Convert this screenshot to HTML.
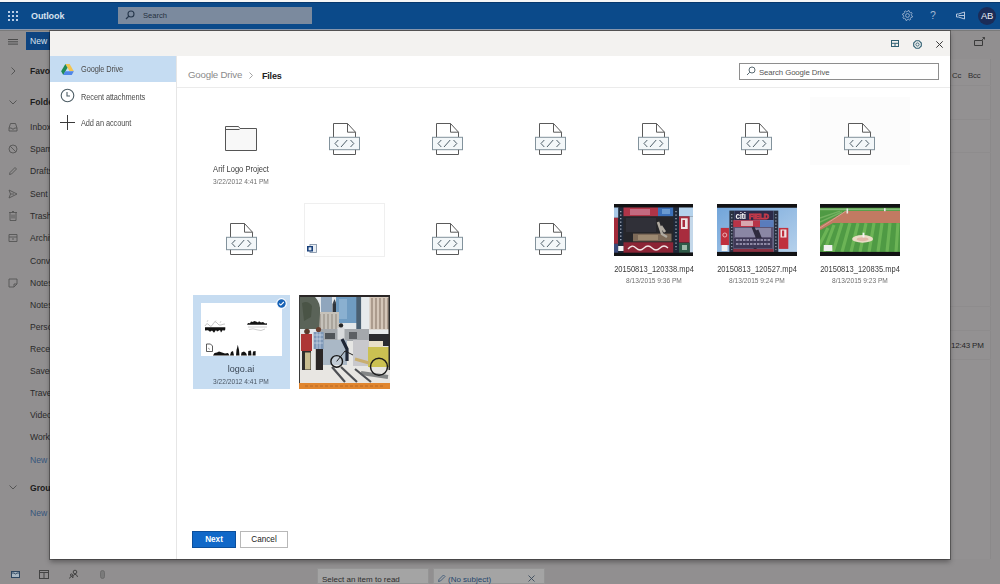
<!DOCTYPE html>
<html><head><meta charset="utf-8">
<style>
*{box-sizing:border-box}
html,body{margin:0;padding:0}
body{width:1000px;height:584px;overflow:hidden;position:relative;background:#918f90;font-family:"Liberation Sans",sans-serif;color:#333}
.a{position:absolute}
.t{position:absolute;white-space:nowrap;line-height:1}
svg{position:absolute;overflow:visible}
/* top bar */
#topw{left:0;top:0;width:1000px;height:2px;background:#f6f6f6}
#top{left:0;top:2px;width:1000px;height:27px;background:#0b4a8a;border-top:1px solid #07386d}
#topl{left:0;top:29px;width:1000px;height:1px;background:#8898b0}
#topl2{left:0;top:30px;width:1000px;height:1px;background:#7a7a7a}
/* bg outlook */
.fl{position:absolute;left:30px;font-size:8.6px;color:#2a2a2a;white-space:nowrap;line-height:1}
.fb{font-weight:bold;color:#1c1c1c}
.fn{color:#35557c}
/* modal */
#modal{left:50px;top:31px;width:900px;height:528px;background:#fff;box-shadow:0 0 0 1px rgba(0,0,0,.3),0 3px 5px rgba(0,0,0,.35)}
#mhead{left:0;top:0;width:901px;height:25px;background:#f3f2f0}
#mnav{left:0;top:25px;width:128px;height:503px;border-right:1px solid #e4e4e4;background:#fff}
#sel{left:1px;top:0;width:126px;height:26px;background:#c5dcf2}
#crumb{left:128px;top:25px;width:773px;height:32px;border-bottom:1px solid #ebebeb}
.nav{font-size:8.8px;color:#4c4c4c;letter-spacing:-0.1px;transform-origin:0 0;transform:scaleX(0.84)}
.nm{font-size:8.9px;color:#3c3c3c;text-align:center;width:100px;transform-origin:50% 0;transform:scaleX(0.85)}
.dt{font-size:7.1px;color:#6e6e6e;text-align:center;width:100px;transform-origin:50% 0;transform:scaleX(0.93)}
</style></head>
<body>
<div class="a" id="topw"></div>
<div class="a" id="top"></div>
<div class="a" id="topl"></div>
<div class="a" id="topl2"></div>

<!-- top bar contents -->
<svg style="left:8px;top:11px" width="10" height="10" viewBox="0 0 10 10">
  <g fill="#b9cde6">
  <rect x="0" y="0" width="2" height="2"/><rect x="4" y="0" width="2" height="2"/><rect x="8" y="0" width="2" height="2"/>
  <rect x="0" y="4" width="2" height="2"/><rect x="4" y="4" width="2" height="2"/><rect x="8" y="4" width="2" height="2"/>
  <rect x="0" y="8" width="2" height="2"/><rect x="4" y="8" width="2" height="2"/><rect x="8" y="8" width="2" height="2"/>
  </g>
</svg>
<div class="t" style="left:31px;top:12px;font-size:9px;font-weight:bold;color:#d6e1ee;letter-spacing:-0.1px">Outlook</div>
<div class="a" style="left:118px;top:7px;width:194px;height:17px;background:#7b8a9e"></div>
<svg style="left:125px;top:10px" width="10" height="10" viewBox="0 0 10 10"><circle cx="6" cy="4" r="3" fill="none" stroke="#27384c" stroke-width="1.1"/><path d="M4 6 L1 9" stroke="#27384c" stroke-width="1.2"/></svg>
<div class="t" style="left:143px;top:12px;font-size:7.6px;color:#26323f">Search</div>
<!-- right icons -->
<svg style="left:902px;top:10px" width="11" height="11" viewBox="0 0 11 11"><path d="M9.50 5.50 L10.47 6.09 L10.19 7.23 L9.06 7.32 L8.33 8.33 L8.60 9.43 L7.59 10.04 L6.74 9.30 L5.50 9.50 L4.91 10.47 L3.77 10.19 L3.68 9.06 L2.67 8.33 L1.57 8.60 L0.96 7.59 L1.70 6.74 L1.50 5.50 L0.53 4.91 L0.81 3.77 L1.94 3.68 L2.67 2.67 L2.40 1.57 L3.41 0.96 L4.26 1.70 L5.50 1.50 L6.09 0.53 L7.23 0.81 L7.32 1.94 L8.33 2.67 L9.43 2.40 L10.04 3.41 L9.30 4.26 Z" fill="none" stroke="#a3b8d2" stroke-width="0.9"/><circle cx="5.5" cy="5.5" r="1.9" fill="none" stroke="#a3b8d2" stroke-width="0.9"/></svg>
<div class="t" style="left:930px;top:10px;font-size:10.5px;color:#a3b8d2">?</div>
<svg style="left:955px;top:11px" width="11" height="9" viewBox="0 0 11 9"><path d="M1.5 3 H3.5 L9.5 1 V8 L3.5 6 H1.5 Z" fill="none" stroke="#b4c6dd" stroke-width="1"/><path d="M3.5 4.5 H9" stroke="#b4c6dd" stroke-width="1"/></svg>
<div class="a" style="left:978px;top:7px;width:18px;height:18px;border-radius:50%;background:#1b2c58"></div>
<div class="t" style="left:978px;top:11px;width:18px;text-align:center;font-size:9.4px;color:#e8edf5;letter-spacing:-0.3px">AB</div>

<!-- outlook background (dimmed) -->
<svg style="left:8px;top:39px" width="10" height="6" viewBox="0 0 10 6"><path d="M0 .5H10M0 2.8H10M0 5.1H10" stroke="#4a4a4a" stroke-width="1"/></svg>
<div class="a" style="left:26px;top:32px;width:24px;height:18px;background:#0e4480"></div>
<div class="t" style="left:30px;top:37px;font-size:8.6px;color:#d8e2ee">New</div>

<svg style="left:11px;top:67px" width="5" height="8" viewBox="0 0 5 8"><path d="M.5 .5 L4 4 L.5 7.5" fill="none" stroke="#555" stroke-width="1"/></svg>
<div class="fl fb" style="top:67px">Favorites</div>
<svg style="left:9px;top:100px" width="8" height="5" viewBox="0 0 8 5"><path d="M.5 .5 L4 4 L7.5 .5" fill="none" stroke="#555" stroke-width="1"/></svg>
<div class="fl fb" style="top:98px">Folders</div>
<div class="fl" style="top:123px">Inbox</div>
<div class="fl" style="top:145px">Spam</div>
<div class="fl" style="top:167px">Drafts</div>
<div class="fl" style="top:190px">Sent Items</div>
<div class="fl" style="top:212px">Trash</div>
<div class="fl" style="top:234px">Archive</div>
<div class="fl" style="top:257px">Conversation</div>
<div class="fl" style="top:279px">Notes</div>
<div class="fl" style="top:301px">Notes</div>
<div class="fl" style="top:323px">Personal</div>
<div class="fl" style="top:345px">Receipts</div>
<div class="fl" style="top:367px">Saved</div>
<div class="fl" style="top:389px">Travel</div>
<div class="fl" style="top:411px">Videos</div>
<div class="fl" style="top:433px">Work</div>
<div class="fl fn" style="top:456px">New folder</div>
<svg style="left:9px;top:485px" width="8" height="5" viewBox="0 0 8 5"><path d="M.5 .5 L4 4 L7.5 .5" fill="none" stroke="#555" stroke-width="1"/></svg>
<div class="fl fb" style="top:484px">Groups</div>
<div class="fl fn" style="top:509px">New group</div>
<!-- folder icons -->
<svg style="left:8px;top:122px" width="10" height="10" viewBox="0 0 10 10" fill="none" stroke="#555" stroke-width="0.9">
  <path d="M1 6 L2.5 1.5 H7.5 L9 6 V9 H1 Z M1 6 H3.5 L4 7 H6 L6.5 6 H9"/>
</svg>
<svg style="left:8px;top:144px" width="10" height="10" viewBox="0 0 10 10" fill="none" stroke="#555" stroke-width="0.9"><circle cx="5" cy="5" r="4"/><path d="M2.2 2.2 L7.8 7.8"/></svg>
<svg style="left:8px;top:166px" width="10" height="10" viewBox="0 0 10 10" fill="none" stroke="#555" stroke-width="0.9"><path d="M1.5 8.5 L2 6.5 L7 1.5 L8.5 3 L3.5 8 Z"/></svg>
<svg style="left:8px;top:189px" width="10" height="10" viewBox="0 0 10 10" fill="none" stroke="#555" stroke-width="0.9"><path d="M1 1 L9 5 L1 9 L2.5 5 Z M2.5 5 H6"/></svg>
<svg style="left:9px;top:211px" width="8" height="10" viewBox="0 0 8 10" fill="none" stroke="#555" stroke-width="0.9"><path d="M0 1.5 H8 M1 1.5 V9.5 H7 V1.5 M3 0.5 H5 M3 3.5 V7.5 M5 3.5 V7.5"/></svg>
<svg style="left:8px;top:233px" width="10" height="10" viewBox="0 0 10 10" fill="none" stroke="#555" stroke-width="0.9"><path d="M1 1.5 H9 V8.5 H1 Z M1 4 H9 M4 6 H6"/></svg>
<svg style="left:8px;top:278px" width="10" height="10" viewBox="0 0 10 10" fill="none" stroke="#555" stroke-width="0.9"><path d="M1 1 H9 V6 L6 9 H1 Z M6 9 V6 H9"/></svg>
<!-- bottom nav -->
<svg style="left:11px;top:571px" width="9" height="7" viewBox="0 0 9 7" fill="none" stroke="#2e4660" stroke-width="1"><rect x=".5" y=".5" width="8" height="6" fill="#a8b6c2"/><path d="M.5 2 H3 L4.5 3 L6 2 H8.5"/></svg>
<svg style="left:39px;top:570px" width="10" height="9" viewBox="0 0 10 9" fill="none" stroke="#444" stroke-width="1"><rect x=".5" y=".5" width="9" height="8"/><path d="M.5 2.5 H9.5 M5 2.5 V8.5"/></svg>
<svg style="left:69px;top:569px" width="10" height="10" viewBox="0 0 10 10" fill="none" stroke="#3a3a3a" stroke-width="0.9"><circle cx="6" cy="3" r="1.8"/><path d="M3.5 9 Q4 5.5 6 5.3 Q8 5.5 8.6 8"/><circle cx="2.5" cy="6" r="1.1"/><path d="M.5 9.5 Q1 7.6 2.5 7.5 Q3.5 7.6 4 8.5"/></svg>
<svg style="left:100px;top:570px" width="5" height="9" viewBox="0 0 5 9"><rect x=".5" y=".5" width="4" height="8" rx="2" fill="#7a7a7a" stroke="#666" stroke-width="0.8"/></svg>
<!-- bottom tabs -->
<div class="a" style="left:317px;top:568px;width:112px;height:16px;background:#a4a4a4;border:1px solid #949494"></div>
<div class="t" style="left:322px;top:576px;font-size:8px;color:#2d2d2d">Select an item to read</div>
<div class="a" style="left:433px;top:568px;width:112px;height:16px;background:#a4a4a4;border:1px solid #949494"></div>
<svg style="left:438px;top:574px" width="8" height="8" viewBox="0 0 8 8" fill="none" stroke="#3d5878" stroke-width="0.9"><path d="M.5 7.5 L1 5.5 L5.5 1 L7 2.5 L2.5 7 Z"/></svg>
<div class="t" style="left:448px;top:576px;font-size:8px;color:#26466c">(No subject)</div>
<svg style="left:528px;top:575px" width="7" height="7" viewBox="0 0 7 7" stroke="#3a4a5a" stroke-width="0.9"><path d="M.5 .5 L6.5 6.5 M6.5 .5 L.5 6.5"/></svg>

<!-- right strip -->
<div class="a" style="left:950px;top:59px;width:41px;height:500px;background:#939192;border-right:1px solid #8b898a"></div>
<div class="a" style="left:950px;top:85px;width:41px;height:1px;background:#8e8c8d"></div>
<div class="a" style="left:950px;top:119px;width:41px;height:1px;background:#8e8c8d"></div>
<div class="a" style="left:950px;top:152px;width:41px;height:1px;background:#8e8c8d"></div>
<div class="a" style="left:950px;top:306px;width:41px;height:1px;background:#8e8c8d"></div>
<div class="a" style="left:950px;top:330px;width:41px;height:1px;background:#8e8c8d"></div>
<div class="a" style="left:950px;top:359px;width:41px;height:1px;background:#8e8c8d"></div>
<svg style="left:974px;top:37px" width="11" height="9" viewBox="0 0 11 9" fill="none" stroke="#3a3a3a" stroke-width="1"><path d="M.5 3.5 H8.5 V8.5 H.5 Z"/><path d="M8 3 L10.5 .5 M8.5 .5 H10.5 V2.5" stroke-width="0.9"/></svg>
<div class="t" style="left:952px;top:72px;font-size:7.8px;color:#2e2e2e;letter-spacing:-0.2px">Cc</div>
<div class="t" style="left:968px;top:72px;font-size:7.8px;color:#2e2e2e;letter-spacing:-0.2px">Bcc</div>
<div class="t" style="left:951px;top:342px;font-size:8px;color:#262626;letter-spacing:-0.2px">12:43 PM</div>

<!-- MODAL -->
<div class="a" id="modal"></div>
<div class="a" style="left:50px;top:31px;width:900px;height:25px;background:#f3f2f0"></div>
<!-- header icons -->
<svg style="left:891px;top:40px" width="8" height="7" viewBox="0 0 8 7" fill="none" stroke="#2f5f72" stroke-width="1"><rect x=".5" y=".5" width="7" height="6"/><path d="M.5 3.3 H7.5 M4 3.3 V6.5"/></svg>
<svg style="left:913px;top:39.5px" width="9" height="9" viewBox="0 0 9 9" fill="none" stroke="#2f5f72"><path d="M3 .7 H6 L8.3 3 V6 L6 8.3 H3 L.7 6 V3 Z" stroke-width="1.1"/><circle cx="4.5" cy="4.5" r="1.6" stroke-width="0.9"/></svg>
<svg style="left:936px;top:40.5px" width="7" height="7" viewBox="0 0 7 7" stroke="#3a3a3a" stroke-width="1"><path d="M.3 .3 L6.7 6.7 M6.7 .3 L.3 6.7"/></svg>

<!-- nav -->
<div class="a" style="left:176px;top:56px;width:1px;height:503px;background:#e6e6e6"></div>
<div class="a" style="left:50px;top:56px;width:126px;height:26px;background:#c5dcf2"></div>
<svg style="left:61px;top:63.5px" width="13" height="11" viewBox="0 0 15 13">
  <path d="M5 0 H10 L15 8.5 H10 Z" fill="#f3c44f"/>
  <path d="M5 0 L0 8.5 L2.5 13 L7.5 4.3 Z" fill="#1f8a56"/>
  <path d="M2.5 13 H12.5 L15 8.5 H5 Z" fill="#4f86e8"/>
</svg>
<div class="t nav" style="left:81px;top:65px">Google Drive</div>
<svg style="left:60px;top:88.2px" width="15" height="15" viewBox="0 0 15 15" fill="none" stroke="#4e5e66" stroke-width="1.1"><circle cx="7.5" cy="7.5" r="6.3"/><path d="M7 4 V8 H10"/></svg>
<div class="t nav" style="left:81px;top:92.5px">Recent attachments</div>
<svg style="left:60px;top:115px" width="15" height="15" viewBox="0 0 15 15" stroke="#3a3a3a" stroke-width="1"><path d="M7.5 0 V15 M0 7.5 H15"/></svg>
<div class="t nav" style="left:81px;top:119px">Add an account</div>

<!-- breadcrumb -->
<div class="a" style="left:177px;top:87px;width:773px;height:1px;background:#ebebeb"></div>
<div class="t" style="left:188px;top:70px;font-size:9.7px;color:#8a8a8a;letter-spacing:-0.2px">Google Drive</div>
<svg style="left:249px;top:72px" width="4" height="7" viewBox="0 0 4 7" fill="none" stroke="#999" stroke-width="0.9"><path d="M.5 .5 L3.5 3.5 L.5 6.5"/></svg>
<div class="t" style="left:262px;top:71.5px;font-size:9px;color:#222;font-weight:bold;letter-spacing:-0.2px">Files</div>
<div class="a" style="left:739px;top:63px;width:200px;height:17px;border:1px solid #8e8e8e;background:#fff"></div>
<svg style="left:746px;top:66px" width="10" height="10" viewBox="0 0 10 10" fill="none" stroke="#5a6a72" stroke-width="1"><circle cx="6" cy="4" r="3"/><path d="M3.8 6.2 L1 9"/></svg>
<div class="t" style="left:759px;top:69px;font-size:7.8px;color:#555;letter-spacing:-0.1px">Search Google Drive</div>

<!-- SYMBOLS -->
<svg width="0" height="0" style="position:absolute;left:0;top:0">
<defs>
<symbol id="code" viewBox="0 0 31 32">
  <path d="M4.5 14 V0.5 H18.5 L26.5 9.2 V14" fill="#fff" stroke="#5a5a5a" stroke-width="1"/>
  <path d="M18.5 0.5 V9.2 H26.5" fill="none" stroke="#5a5a5a" stroke-width="1"/>
  <rect x="0.5" y="14.3" width="30" height="12.4" fill="#f3f7f9" stroke="#82929c" stroke-width="1"/>
  <path d="M4.5 26.8 V31.5 H26.5 V26.8" fill="none" stroke="#5a5a5a" stroke-width="1"/>
  <path d="M9.3 17 L6 20.5 L9.3 24 M18.2 17 L12 24 M21.5 17 L24.8 20.5 L21.5 24" fill="none" stroke="#4e5e68" stroke-width="1"/>
</symbol>
</defs></svg>

<!-- hover box item 7 -->
<div class="a" style="left:810px;top:97px;width:100px;height:68px;background:#fcfcfc"></div>

<!-- ROW 1 -->
<svg style="left:225px;top:126px" width="33" height="26" viewBox="0 0 33 26">
  <path d="M0.5 0.5 H13.5 L15 2.5 H31.5 V24.5 H0.5 Z" fill="#f8f8f8" stroke="#555" stroke-width="1"/>
  <path d="M0.5 3.5 H14.5" stroke="#555" stroke-width="1"/>
</svg>
<div class="t nm" style="left:191px;top:165px">Arif Logo Project</div>
<div class="t dt" style="left:191px;top:178.5px">3/22/2012 4:41 PM</div>

<svg style="left:329px;top:123px" width="31" height="32"><use href="#code"/></svg>
<svg style="left:432px;top:123px" width="31" height="32"><use href="#code"/></svg>
<svg style="left:535px;top:123px" width="31" height="32"><use href="#code"/></svg>
<svg style="left:638px;top:123px" width="31" height="32"><use href="#code"/></svg>
<svg style="left:741px;top:123px" width="31" height="32"><use href="#code"/></svg>
<svg style="left:844px;top:123px" width="31" height="32"><use href="#code"/></svg>

<!-- ROW 2 -->
<svg style="left:226px;top:223px" width="31" height="32"><use href="#code"/></svg>
<div class="a" style="left:304px;top:203px;width:81px;height:54px;border:1px solid #efefef;background:#fff"></div>
<svg style="left:307px;top:244px" width="10" height="9" viewBox="0 0 10 9">
  <rect x="3" y="0.5" width="6.5" height="8" fill="#e9eef4" stroke="#7a8aa0" stroke-width="0.8"/>
  <rect x="0" y="2" width="6" height="5.5" fill="#173f7a"/>
  <rect x="1.6" y="3.3" width="2.8" height="3" fill="#dfe8f2"/>
</svg>
<svg style="left:432px;top:223px" width="31" height="32"><use href="#code"/></svg>
<svg style="left:535px;top:223px" width="31" height="32"><use href="#code"/></svg>

<!-- video 1 -->
<svg style="left:614px;top:204px;overflow:hidden;filter:blur(0.45px)" width="79" height="52" viewBox="0 0 79 52">
  <g>
  <rect width="79" height="52" fill="#2a2a30"/>
  <rect x="0" y="3.3" width="5.2" height="10.5" fill="#a9c8e6"/>
  <rect x="0" y="13.8" width="4" height="26" fill="#a22a3a"/>
  <rect x="0" y="39.8" width="4.2" height="9" fill="#3a4a7a"/>
  <rect x="4.2" y="3.3" width="5.3" height="45.5" fill="#1e2838"/>
  <path d="M6.8 7 V38" stroke="#c8d0e0" stroke-width="1.1" stroke-dasharray="1.3 2.2"/>
  <rect x="9.5" y="3.3" width="34.5" height="9.1" fill="#b03548"/>
  <rect x="16" y="5" width="20" height="6" fill="#c46a80"/>
  <rect x="44" y="3.3" width="15.4" height="9.1" fill="#3c70b8"/>
  <rect x="48" y="5" width="8" height="5" fill="#6a9ad0"/>
  <rect x="9.5" y="12.4" width="49.9" height="26" fill="#26262a"/>
  <rect x="12" y="14" width="30" height="14" fill="#303038"/>
  <rect x="19" y="29.6" width="38.5" height="7.7" fill="#7d6a58"/>
  <rect x="24" y="31" width="20" height="5" fill="#9c8870"/>
  <path d="M44 18 L48 30 L53 33 M47 22 L51 28" stroke="#b0aaa0" stroke-width="2.5" fill="none"/>
  <rect x="9.5" y="38.3" width="49.9" height="10.5" fill="#8c2435"/>
  <path d="M14 45 Q18 40 22 44 T30 44 T38 44 T46 44 T54 44" stroke="#f2e6e6" stroke-width="1.3" fill="none"/>
  <rect x="4.2" y="42" width="5.3" height="5" fill="#f4f4f4"/>
  <rect x="59.4" y="3.3" width="5.6" height="45.5" fill="#1e2838"/>
  <path d="M62 7 V46" stroke="#c0c8d8" stroke-width="1.1" stroke-dasharray="1.3 2.2"/>
  <rect x="65" y="3.3" width="14" height="9.1" fill="#b4d2ec"/>
  <rect x="65" y="12.4" width="10.7" height="26" fill="#a82c3e"/>
  <rect x="67" y="14.3" width="6.7" height="10.7" fill="#eee4e4"/>
  <rect x="68.5" y="16" width="2.5" height="7" fill="#a82c3e"/>
  <rect x="75.7" y="12.4" width="3.3" height="36" fill="#c4d8ea"/>
  <rect x="65" y="39" width="10.7" height="9.8" fill="#2e5a48"/>
  <rect x="68" y="41" width="5" height="5" fill="#9cb8a8"/>
  <rect x="0" y="0" width="79" height="3.3" fill="#121214"/>
  <rect x="0" y="48.8" width="79" height="3.2" fill="#121214"/>
  </g>
</svg>
<div class="t nm" style="left:604px;top:265px">20150813_120338.mp4</div>
<div class="t dt" style="left:604px;top:277.5px">8/13/2015 9:36 PM</div>

<!-- video 2 -->
<svg style="left:717px;top:204px;overflow:hidden;filter:blur(0.45px)" width="80" height="52" viewBox="0 0 80 52">
  <defs><linearGradient id="sky2" x1="0" y1="0" x2="1" y2="1"><stop offset="0" stop-color="#6fa3d9"/><stop offset="1" stop-color="#b9d3ec"/></linearGradient></defs>
  <g>
  <rect width="80" height="52" fill="url(#sky2)"/>
  <rect x="12.4" y="6.6" width="4.8" height="41.4" fill="#2a3040"/>
  <rect x="56.5" y="6.6" width="4.8" height="41.4" fill="#2a3040"/>
  <path d="M14.8 10 V46 M58.9 10 V46" stroke="#b8c4d8" stroke-width="1" stroke-dasharray="1.2 2"/>
  <rect x="17.2" y="6.6" width="39.3" height="9.6" fill="#2c2a48"/>
  <text x="18.5" y="14.8" font-size="8.2" font-weight="bold" fill="#f4f4f4" font-family="Liberation Sans" letter-spacing="-0.4">citi</text>
  <text x="32" y="14.8" font-size="7.4" font-weight="bold" fill="none" stroke="#c83a4a" stroke-width="0.9" font-family="Liberation Sans" letter-spacing="-0.3">FIELD</text>
  <rect x="16.2" y="16.2" width="26.8" height="6.8" fill="#b83448"/>
  <rect x="24" y="17" width="12" height="5" fill="#e6d8dc" opacity=".7"/>
  <rect x="43" y="16.2" width="13.5" height="6.8" fill="#5a7cbc"/>
  <rect x="16.2" y="23" width="40.3" height="22" fill="#5c5474"/>
  <rect x="18" y="24" width="36" height="9" fill="#8a86a4"/>
  <path d="M36 23 L40 33 L38 45 M40 26 L44 36" stroke="#2e2a3e" stroke-width="3" fill="none"/>
  <rect x="17" y="34" width="38" height="10" fill="#3e3856"/>
  <path d="M19 36 H53 M19 40 H53" stroke="#aaa4c0" stroke-width="1.6" stroke-dasharray="2.5 1"/>
  <rect x="16.2" y="45" width="40.3" height="3" fill="#8c3040"/>
  <rect x="3.75" y="23.9" width="8.2" height="17.2" fill="#c0303e"/>
  <circle cx="7.8" cy="31" r="2" fill="none" stroke="#f0d0d0" stroke-width="0.8"/>
  <rect x="4.7" y="41" width="5.8" height="6" fill="#f2f2f2"/>
  <rect x="61.8" y="23.9" width="9.5" height="21" fill="#c0303e"/>
  <rect x="63.5" y="25.5" width="6" height="8" fill="#f0e4e4"/>
  <rect x="65" y="26.5" width="2.2" height="6" fill="#c0303e"/>
  <rect x="0" y="0" width="80" height="3.75" fill="#121214"/>
  <rect x="0" y="47.9" width="80" height="4.1" fill="#121214"/>
  </g>
</svg>
<div class="t nm" style="left:707px;top:265px">20150813_120527.mp4</div>
<div class="t dt" style="left:707px;top:277.5px">8/13/2015 9:24 PM</div>

<!-- video 3 -->
<svg style="left:820px;top:204px;overflow:hidden;filter:blur(0.45px)" width="80" height="52" viewBox="0 0 80 52">
  <g>
  <rect width="80" height="52" fill="#4f9a44"/>
  <rect x="0" y="3.75" width="80" height="3.4" fill="#5aa24c"/>
  <path d="M0 5.2 H80" stroke="#b8d8b0" stroke-width="0.7"/>
  <path d="M25.8 7.1 H80 V19.1 H13 L0.9 25.8 L0 25.8 V22 Z" fill="#c27a62"/>
  <path d="M25.8 7.1 L0 24" stroke="#d8a090" stroke-width="1"/>
  <path d="M0 14 L20 7.1 M0 18 L22 8" stroke="#74b060" stroke-width="1.5"/>
  <path d="M-4 48 L8 24 M4 48 L14 21 M13 48 L22 19.1 M22 48 L30 19.1 M31 48 L38 19.1 M40 48 L46 19.1 M49 48 L54 19.1 M58 48 L62 19.1 M67 48 L70 19.1 M76 48 L78 19.1" stroke="#6cb456" stroke-width="3.2"/>
  <ellipse cx="42.6" cy="34.9" rx="10.5" ry="3.8" fill="#eadcc6"/>
  <ellipse cx="42.6" cy="35.2" rx="6" ry="2" fill="#e0b8a8"/>
  <rect x="42.6" y="28.7" width="1.8" height="4.8" fill="#f2f2f2"/>
  <rect x="26.5" y="4.5" width="1.6" height="5" fill="#e8e8e8"/>
  <rect x="64" y="4.2" width="1.6" height="3" fill="#e8e8e8"/>
  <rect x="3.75" y="41" width="8.6" height="6" fill="#f0f0f0"/>
  <rect x="0" y="0" width="80" height="3.75" fill="#121214"/>
  <rect x="0" y="47.9" width="80" height="4.1" fill="#121214"/>
  </g>
</svg>
<div class="t nm" style="left:810px;top:265px">20150813_120835.mp4</div>
<div class="t dt" style="left:810px;top:277.5px">8/13/2015 9:23 PM</div>

<!-- ROW 3 -->
<div class="a" style="left:193px;top:295px;width:97px;height:94px;background:#c6dcf1"></div>
<svg style="left:201px;top:303px;overflow:hidden" width="81" height="53" viewBox="0 0 81 53">
  <rect width="81" height="53" fill="#fff"/>
  <path d="M4 23 Q6 19 8 22 T12 21 T16 20 T20 22 T24 21" stroke="#b8b8b8" stroke-width="0.8" fill="none"/>
  <path d="M6 19 L7 17 M14 19 L15 17.5 M19 20 L20 18" stroke="#c4c4c4" stroke-width="0.7"/>
  <path d="M4 24.3 H24.3 V26.5 L23 28 L22 26.8 L20 29.5 L19 27 L16 28.5 L15 27 L13 29.8 L11 27.5 L9 28.8 L7 27.2 L4 27.5 Z" fill="#121212"/>
  <path d="M46 21.8 L47 20 L49 20.2 L50 18.5 L52 19 L53 17.9 L55 18.4 L57 19.5 L58 18.2 L60 19.5 L62 19 L64 20.5 L66 20.3 V21.8 Z" fill="#121212"/>
  <path d="M47 24 H66 M48 26.5 Q52 25 56 26.8 T64 26" stroke="#c0c0c0" stroke-width="0.8" fill="none"/>
  <path d="M5.5 41 H9.5 L11.5 43 V48.5 H5.5 Z" fill="#fff" stroke="#333" stroke-width="0.8"/>
  <path d="M7 45 L9 46.5" stroke="#666" stroke-width="0.6"/>
  <path d="M12 52.6 L13.5 50 L16 49.5 L18 48.5 L21 49.5 L24 50.5 L27 50 L28.5 52.6 Z
           M29 52.6 L30 49 L32 48 L33 52.6 Z
           M35 52.6 L35.5 47 L36.3 44 L36.8 41.7 L37.3 44 L38 47 L38.5 52.6 Z
           M40 52.6 L40.5 49.5 L43 48.5 L45 50 L46 52.6 Z
           M47 52.6 L47.3 48 L50 47.6 L50.5 52.6 Z
           M51.5 52.6 L52 48.5 L54.6 48 V52.6 Z" fill="#121212"/>
</svg>
<svg style="left:276px;top:298px" width="11" height="11" viewBox="0 0 11 11">
  <circle cx="5.5" cy="5.5" r="4.8" fill="#1662b6" stroke="#fff" stroke-width="1.2"/>
  <path d="M3.2 5.6 L4.8 7.1 L7.8 4" fill="none" stroke="#fff" stroke-width="1.1"/>
</svg>
<div class="t nm" style="left:191px;top:364px;font-size:9.8px;color:#3a4654;transform:scaleX(0.92)">logo.ai</div>
<div class="t dt" style="left:191px;top:378.5px;color:#4a5664">3/22/2012 4:41 PM</div>

<!-- photo -->
<svg style="left:299px;top:295px;overflow:hidden;filter:blur(0.45px)" width="91" height="94" viewBox="0 0 91 94">
  <rect width="91" height="94" fill="#e6e6e4"/>
  <!-- sky & buildings -->
  <rect x="0" y="0" width="91" height="40" fill="#e4e8ea"/>
  <rect x="22" y="2" width="11" height="17" fill="#90a6bd"/>
  <rect x="33.5" y="9" width="4" height="10" fill="#2e343c"/>
  <path d="M33.5 9 L35.5 4 L37.5 9 Z" fill="#3a4048"/>
  <rect x="37" y="2" width="22" height="26" fill="#6f9cc2"/>
  <rect x="40" y="4" width="8" height="20" fill="#8ab0d0"/>
  <rect x="57.3" y="2" width="5" height="34" fill="#4a6072"/>
  <rect x="62.3" y="2" width="8.2" height="34" fill="#e6eaec"/>
  <rect x="70.5" y="2" width="20.5" height="33" fill="#d4c6b8"/>
  <path d="M73 3 V34 M77 3 V34 M81 3 V34 M85 3 V34 M89 3 V34" stroke="#8a7a6c" stroke-width="1.1"/>
  <rect x="18" y="17" width="22" height="21" fill="#c6c2ba"/>
  <path d="M21 19 V37 M25 19 V37 M29 19 V37 M33 19 V37 M37 19 V37" stroke="#8f887e" stroke-width="1"/>
  <path d="M1 2 H16 Q22 8 21 18 L20 34 H1 Z" fill="#5a6358"/>
  <path d="M3 8 Q9 5 13 11 L12 22 L5 26 Z" fill="#4a5446"/>
  <!-- street level -->
  <rect x="20" y="34" width="50" height="12" fill="#a4a8ac"/>
  <rect x="26" y="38" width="10" height="6" fill="#505458"/>
  <rect x="50" y="37" width="8" height="7" fill="#5c6064"/>
  <rect x="24" y="45" width="24" height="25" fill="#aab8c6"/>
  <rect x="70.5" y="34.5" width="19" height="4.5" fill="#e6eaec"/>
  <rect x="70" y="39" width="21" height="12" fill="#2a2c30"/>
  <rect x="54" y="45" width="16" height="26" fill="#c8c8cc"/>
  <!-- boys -->
  <circle cx="8" cy="36.5" r="2.8" fill="#5a3a2c"/>
  <rect x="2" y="39" width="11" height="17" fill="#ad3636"/>
  <rect x="3" y="56" width="9" height="19" fill="#2e2c2c"/>
  <rect x="6" y="57.5" width="5.5" height="17" fill="#c8bc90"/>
  <circle cx="19.5" cy="34.5" r="2.6" fill="#6a4030"/>
  <rect x="14.6" y="37" width="10" height="17" fill="#7e98b8"/>
  <path d="M15 40 H24 M15 44 H24 M15 48 H24 M18 37 V54 M21 37 V54" stroke="#d0dae6" stroke-width="0.7"/>
  <rect x="16.8" y="54" width="7.2" height="21" fill="#2a2626"/>
  <!-- cyclist -->
  <circle cx="42" cy="30.5" r="2.2" fill="#242424"/>
  <rect x="38.5" y="32.7" width="7" height="12" fill="#d8dadc"/>
  <path d="M43 44 L48 54 L48 66" stroke="#1e2636" stroke-width="3.2" fill="none"/>
  <circle cx="37.7" cy="66.4" r="5.8" fill="#e4e8ec" fill-opacity=".4" stroke="#151515" stroke-width="1.4"/>
  <path d="M37.7 66.4 L46 56 L54 60" stroke="#222" stroke-width="1" fill="none"/>
  <!-- pedicab -->
  <rect x="70" y="46" width="14" height="8" fill="#e8e0c8"/>
  <rect x="69" y="52" width="21" height="20" fill="#cbc152"/>
  <path d="M56 64 L70 68" stroke="#c8ae70" stroke-width="3"/>
  <rect x="89.5" y="2" width="1.5" height="86" fill="#2a2a2a"/>
  <!-- pavement & shadows -->
  <rect x="0" y="75" width="91" height="13" fill="#e8e6e2"/>
  <path d="M33 72 L46 87 M42 72 L58 87 M56 74 L72 87" stroke="#4e5054" stroke-width="2.2"/>
  <path d="M62 78 L89 82" stroke="#5a5c60" stroke-width="4" stroke-opacity=".7"/>
  <circle cx="80" cy="71.7" r="8.5" fill="none" stroke="#1c1c1c" stroke-width="1.5"/>
  <rect x="0" y="0" width="91" height="2" fill="#2a2626"/>
  <rect x="0" y="0" width="1" height="94" fill="#3a3a3a"/>
  <rect x="0" y="88" width="91" height="6" fill="#e0852e"/>
  <path d="M6 91 H85" stroke="#8a4a20" stroke-width="0.8" stroke-dasharray="3 2" opacity=".6"/>
</svg>

<!-- footer buttons -->
<div class="a" style="left:192px;top:531px;width:44px;height:17px;background:#1068c8;border:1px solid #0b4f9c"></div>
<div class="t" style="left:192px;top:536px;width:44px;text-align:center;font-size:8.2px;font-weight:bold;color:#fff">Next</div>
<div class="a" style="left:240px;top:531px;width:48px;height:17px;background:#fff;border:1px solid #b8b8b8"></div>
<div class="t" style="left:240px;top:536px;width:48px;text-align:center;font-size:8.2px;color:#222">Cancel</div>

</body></html>
